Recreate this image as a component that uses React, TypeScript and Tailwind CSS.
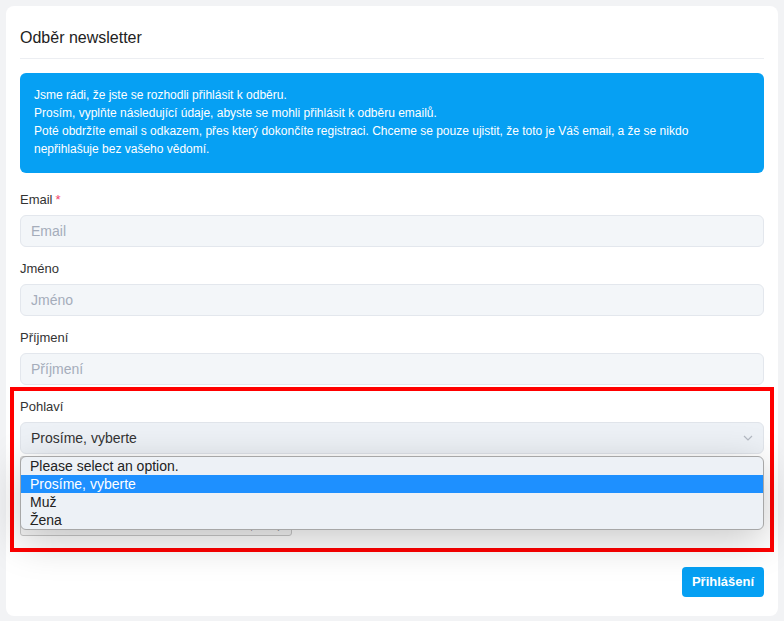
import React from 'react';

const font = { fontFamily: '"Liberation Sans", Arial, sans-serif' };

const Field = ({ label, required, placeholder, first }: { label: string; required?: boolean; placeholder: string; first?: boolean }) => (
  <div className={first ? 'mt-[19px]' : 'mt-[14px]'}>
    <label className="block h-[16px] text-[13px] leading-[16px] text-[#333]">
      {label}
      {required && <span className="ml-[3px] text-[#f1416c]">*</span>}
    </label>
    <input
      type="text"
      placeholder={placeholder}
      className="mt-[7px] block h-[32px] w-full rounded-[6px] border border-[#e3e7ed] bg-[#f3f6f9] px-[10px] text-[14px] text-[#333] placeholder:text-[#a5adbb] outline-none"
    />
  </div>
);

const options = ['Please select an option.', 'Prosíme, vyberte', 'Muž', 'Žena'];

export default function App() {
  return (
    <div className="min-h-[621px] bg-[#f2f3f5] p-[6px]" style={font}>
      <div className="rounded-[8px] bg-white px-[14px] pb-[19px]">
        {/* Header */}
        <div className="border-b border-[#eceef2] pt-[22px] pb-[10px]">
          <h1 className="h-[20px] text-[16px] leading-[20px] text-[#222]">Odběr newsletter</h1>
        </div>

        {/* Info */}
        <div className="mt-[14px] rounded-[6px] bg-[#06a0f3] pl-[14px] pr-[10px] pt-[13px] pb-[15px] text-[12px] leading-[18px] text-white">
          <p>Jsme rádi, že jste se rozhodli přihlásit k odběru.</p>
          <p>Prosím, vyplňte následující údaje, abyste se mohli přihlásit k odběru emailů.</p>
          <p>
            Poté obdržíte email s odkazem, přes který dokončíte registraci. Chceme se pouze ujistit, že toto je Váš email, a že se nikdo
            nepřihlašuje bez vašeho vědomí.
          </p>
        </div>

        <Field label="Email" required placeholder="Email" first />
        <Field label="Jméno" placeholder="Jméno" />
        <Field label="Příjmení" placeholder="Příjmení" />

        {/* Gender (highlighted) */}
        <div className="mt-[2px] -mx-[10px] border-4 border-[#ff0000] px-[6px] pt-[8px] pb-[12px]">
          <label className="block h-[16px] text-[13px] leading-[16px] text-[#333]">Pohlaví</label>
          <div className="relative mt-[7px]">
            <div className="flex h-[32px] items-center justify-between rounded-[6px] border border-[#e0e4ea] bg-[#edf1f6] pl-[10px] pr-[8px] text-[14px] text-[#333]">
              <span>Prosíme, vyberte</span>
              <svg width="10" height="6" viewBox="0 0 10 6" fill="none" className="mr-[2px]">
                <polyline points="1,1 5,5 9,1" stroke="#b4b9c2" strokeWidth="1.2" />
              </svg>
            </div>

            {/* Captcha behind the list */}
            <div className="relative mt-[2px] h-[80px] w-[272px] rounded-[3px] border border-[#c8c8c8] bg-[#f6f6f6]">
              <div className="absolute bottom-[4px] right-[10px] text-[7px] leading-[8px] text-[#777]">Ochrana soukromí - Smluvní podmínky</div>
            </div>

            {/* Open list */}
            <ul className="absolute left-0 right-0 top-[34px] overflow-hidden rounded-[6px] border border-[#a7a7a7] bg-[#edf1f6] text-[14px] leading-[18px] text-[#222] shadow-[0_10px_40px_rgba(0,0,0,0.22)]">
              {options.map((o, i) => (
                <li key={o} className={i === 1 ? 'h-[18px] bg-[#1e90ff] pl-[9px] text-white' : 'h-[18px] pl-[9px]'}>
                  {o}
                </li>
              ))}
            </ul>
          </div>
        </div>

        <div className="mt-[15px] flex justify-end">
          <button className="h-[30px] w-[82px] rounded-[4px] bg-[#06a0f3] text-[13px] font-bold text-white">Přihlášení</button>
        </div>
      </div>
    </div>
  );
}
